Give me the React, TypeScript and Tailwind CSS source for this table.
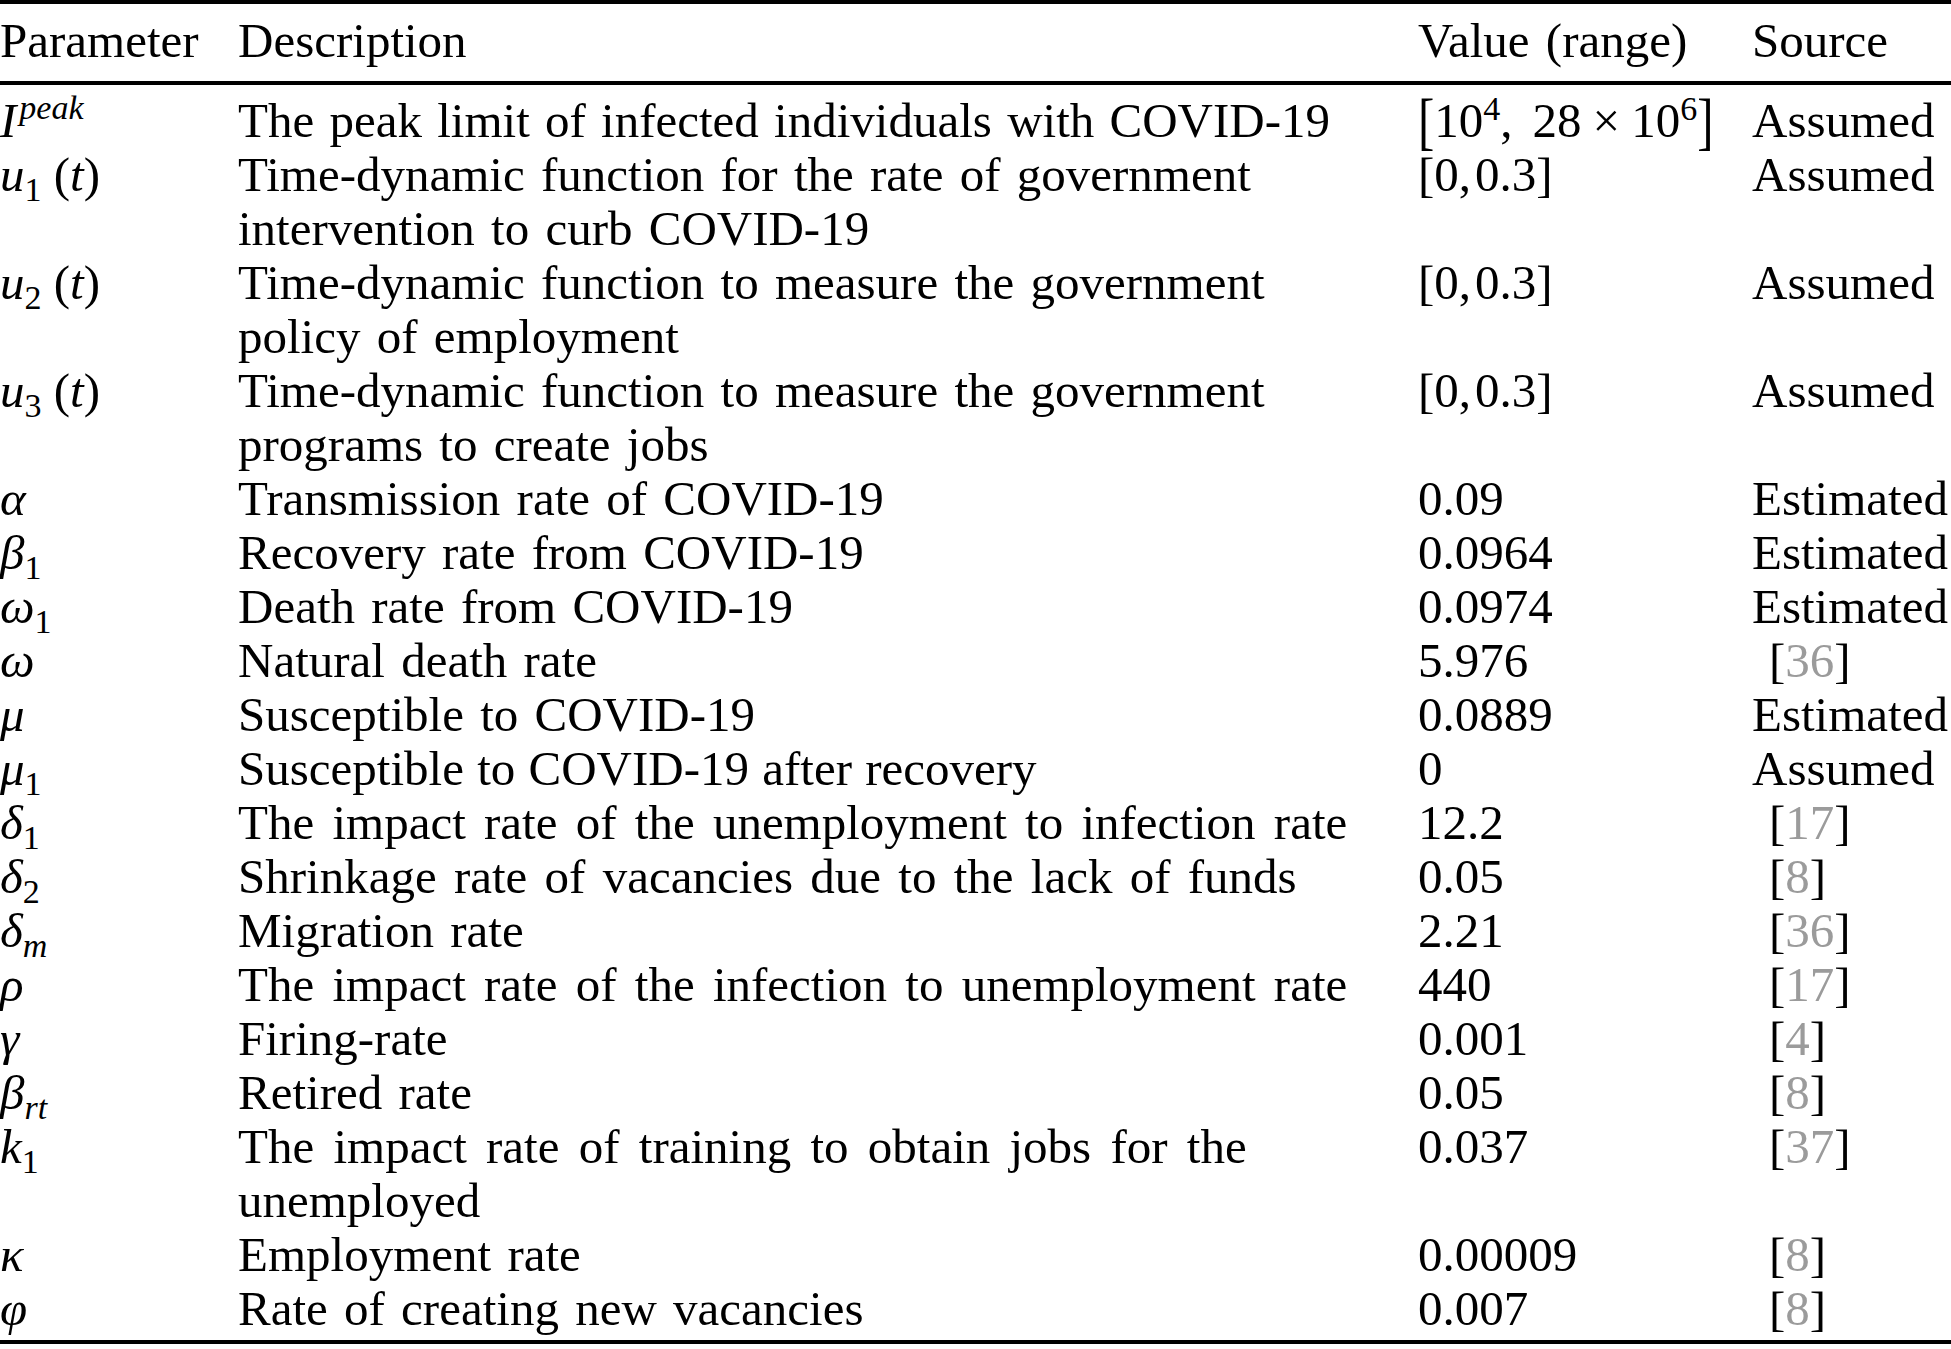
import React from "react";

type Row = {
  param: React.ReactNode;
  desc: string[];
  value: React.ReactNode;
  source: React.ReactNode;
  spacing?: string;
};

const Sub = ({ children }: { children: React.ReactNode }) => (
  <span className="relative top-[10px] text-[34px] leading-none">{children}</span>
);

const Sup = ({ children }: { children: React.ReactNode }) => (
  <span className="relative -top-[17px] text-[34px] leading-none">{children}</span>
);

const Ref = ({ n }: { n: string }) => (
  <span className="pl-[17px]">
    [<span className="text-[#9b9b9b]">{n}</span>]
  </span>
);

const Range = () => (
  <span className="[word-spacing:0px]">
    [0,<span className="pl-[4px]">0.3</span>]
  </span>
);

const rows: Row[] = [
  {
    param: (
      <span className="italic">
        I
        <span className="relative -top-[18px] pl-[3px] text-[34px] leading-none">peak</span>
      </span>
    ),
    desc: ["The peak limit of infected individuals with COVID-19"],
    value: (
      <span className="whitespace-nowrap [word-spacing:0px]">
        <span className="inline-block scale-y-[1.3] font-light">[</span>
        10
        <Sup>4</Sup>,<span className="pl-[20px]">28</span>
        <span className="px-[11px]">×</span>10
        <Sup>6</Sup>
        <span className="inline-block scale-y-[1.3] font-light">]</span>
      </span>
    ),
    source: "Assumed",
    spacing: "[word-spacing:3px]",
  },
  {
    param: (
      <span>
        <i>u</i>
        <Sub>1</Sub> (<i>t</i>)
      </span>
    ),
    desc: ["Time-dynamic function for the rate of government", "intervention to curb COVID-19"],
    value: <Range />,
    source: "Assumed",
  },
  {
    param: (
      <span>
        <i>u</i>
        <Sub>2</Sub> (<i>t</i>)
      </span>
    ),
    desc: ["Time-dynamic function to measure the government", "policy of employment"],
    value: <Range />,
    source: "Assumed",
  },
  {
    param: (
      <span>
        <i>u</i>
        <Sub>3</Sub> (<i>t</i>)
      </span>
    ),
    desc: ["Time-dynamic function to measure the government", "programs to create jobs"],
    value: <Range />,
    source: "Assumed",
  },
  { param: <i>α</i>, desc: ["Transmission rate of COVID-19"], value: "0.09", source: "Estimated" },
  {
    param: (
      <span>
        <i>β</i>
        <Sub>1</Sub>
      </span>
    ),
    desc: ["Recovery rate from COVID-19"],
    value: "0.0964",
    source: "Estimated",
  },
  {
    param: (
      <span>
        <i>ω</i>
        <Sub>1</Sub>
      </span>
    ),
    desc: ["Death rate from COVID-19"],
    value: "0.0974",
    source: "Estimated",
  },
  { param: <i>ω</i>, desc: ["Natural death rate"], value: "5.976", source: <Ref n="36" /> },
  { param: <i>μ</i>, desc: ["Susceptible to COVID-19"], value: "0.0889", source: "Estimated" },
  {
    param: (
      <span>
        <i>μ</i>
        <Sub>1</Sub>
      </span>
    ),
    desc: ["Susceptible to COVID-19 after recovery"],
    value: "0",
    source: "Assumed",
    spacing: "[word-spacing:1px]",
  },
  {
    param: (
      <span>
        <i>δ</i>
        <Sub>1</Sub>
      </span>
    ),
    desc: ["The impact rate of the unemployment to infection rate"],
    value: "12.2",
    source: <Ref n="17" />,
    spacing: "[word-spacing:6px]",
  },
  {
    param: (
      <span>
        <i>δ</i>
        <Sub>2</Sub>
      </span>
    ),
    desc: ["Shrinkage rate of vacancies due to the lack of funds"],
    value: "0.05",
    source: <Ref n="8" />,
    spacing: "[word-spacing:5px]",
  },
  {
    param: (
      <span>
        <i>δ</i>
        <Sub>
          <i>m</i>
        </Sub>
      </span>
    ),
    desc: ["Migration rate"],
    value: "2.21",
    source: <Ref n="36" />,
  },
  {
    param: <i>ρ</i>,
    desc: ["The impact rate of the infection to unemployment rate"],
    value: "440",
    source: <Ref n="17" />,
    spacing: "[word-spacing:6px]",
  },
  { param: <i>γ</i>, desc: ["Firing-rate"], value: "0.001", source: <Ref n="4" /> },
  {
    param: (
      <span>
        <i>β</i>
        <Sub>
          <i>rt</i>
        </Sub>
      </span>
    ),
    desc: ["Retired rate"],
    value: "0.05",
    source: <Ref n="8" />,
  },
  {
    param: (
      <span>
        <i>k</i>
        <Sub>1</Sub>
      </span>
    ),
    desc: ["The impact rate of training to obtain jobs for the", "unemployed"],
    value: "0.037",
    source: <Ref n="37" />,
    spacing: "[word-spacing:7px]",
  },
  { param: <i>κ</i>, desc: ["Employment rate"], value: "0.00009", source: <Ref n="8" /> },
  { param: <i>φ</i>, desc: ["Rate of creating new vacancies"], value: "0.007", source: <Ref n="8" /> },
];

const cols = "grid grid-cols-[238px_1180px_334px_1fr]";

export default function App() {
  return (
    <div className="w-[1951px] h-[1349px] bg-white text-black font-['Liberation_Serif','Times_New_Roman',serif] text-[49px] leading-[54px] [word-spacing:4px] overflow-hidden">
      {/* top rule */}
      <div className="h-[4px] bg-black" />

      {/* header */}
      <div className={`${cols} pt-[10px] pb-[13px]`}>
        <div>Parameter</div>
        <div>Description</div>
        <div>Value (range)</div>
        <div>Source</div>
      </div>
      <div className="h-[4px] bg-black" />

      {/* body */}
      <div className="pt-[9px] pb-[4px]">
        {rows.map((row, i) => (
          <div key={i} className={cols}>
            <div className="whitespace-nowrap [word-spacing:0px]">{row.param}</div>
            <div className={row.spacing}>
              {row.desc.map((line, j) => (
                <div key={j} className="whitespace-nowrap">
                  {line}
                </div>
              ))}
            </div>
            <div className="whitespace-nowrap">{row.value}</div>
            <div className="whitespace-nowrap">{row.source}</div>
          </div>
        ))}
      </div>
      <div className="h-[4px] bg-black" />
    </div>
  );
}
